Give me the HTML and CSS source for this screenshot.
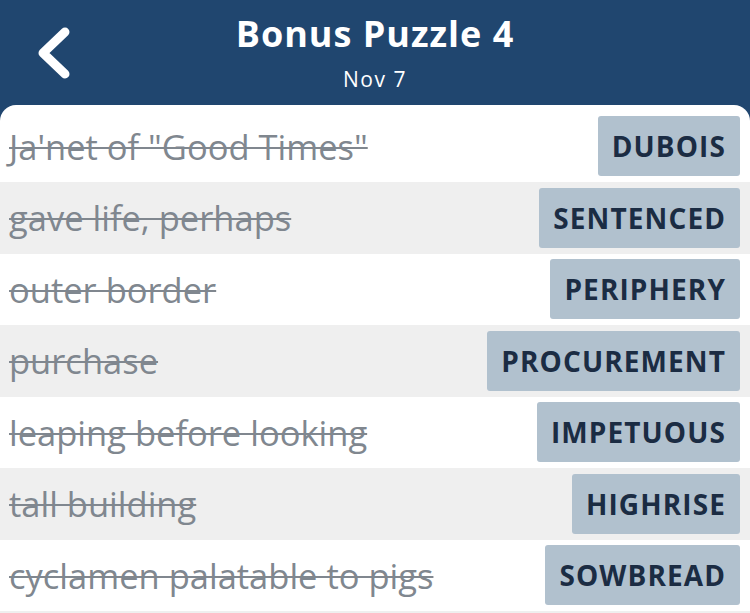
FILE: index.html
```html
<!DOCTYPE html>
<html>

<head>
    <meta charset="utf-8">
    <title>Bonus Puzzle 4</title>
    <meta name="viewport" content="width=device-width, initial-scale=1.0">
    <link rel="stylesheet" href="styles.css">
</head>

<body>
    <div id="topBar">
        <div class="back">
            <svg width="34" height="52" viewBox="0 0 34 52">
                <path d="M29 5 L7 26 L29 47" fill="none" stroke="#ffffff" stroke-width="9" stroke-linecap="round" stroke-linejoin="round"/>
            </svg>
        </div>
        <div class="titles">
            <div class="title">Bonus Puzzle 4</div>
            <div class="date">Nov 7</div>
        </div>
    </div>

    <div id="clueList">
        <div class="clue">
            <span class="text">Ja'net of "Good Times"</span>
            <span class="answer">DUBOIS</span>
        </div>
        <div class="clue">
            <span class="text">gave life, perhaps</span>
            <span class="answer">SENTENCED</span>
        </div>
        <div class="clue">
            <span class="text">outer border</span>
            <span class="answer">PERIPHERY</span>
        </div>
        <div class="clue">
            <span class="text">purchase</span>
            <span class="answer">PROCUREMENT</span>
        </div>
        <div class="clue">
            <span class="text">leaping before looking</span>
            <span class="answer">IMPETUOUS</span>
        </div>
        <div class="clue">
            <span class="text">tall building</span>
            <span class="answer">HIGHRISE</span>
        </div>
        <div class="clue">
            <span class="text">cyclamen palatable to pigs</span>
            <span class="answer">SOWBREAD</span>
        </div>
        <div class="listEnd"></div>
    </div>
</body>
</html>
```

FILE: styles.css
```css
html, body {
    margin: 0;
    height: 100%;
    overflow: hidden;
}

body {
    background-color: #20466f;
    font-family: "Open Sans", "Lato", sans-serif;
}

#topBar {
    height: 105px;
    display: flex;
    align-items: flex-start;
    color: #ffffff;
}

.back {
    width: 110px;
    padding: 27px 0 0 36px;
    box-sizing: border-box;
}

.back svg {
    display: block;
}

.titles {
    flex: 1;
    text-align: center;
    margin-right: 110px;
    padding-top: 14px;
}

.title {
    font-size: 36px;
    font-weight: bold;
    line-height: 40px;
    letter-spacing: 1px;
}

.date {
    font-size: 21px;
    line-height: 26px;
    letter-spacing: 1.5px;
    margin-top: 12px;
}

#clueList {
    background-color: #ffffff;
    border-radius: 16px 16px 0 0;
    padding-top: 5.5px;
}

.clue {
    height: 71.5px;
    display: flex;
    align-items: center;
    justify-content: space-between;
    padding: 0 10px 0 9px;
}

.clue:nth-child(even) {
    background-color: #efefef;
}

.listEnd {
    height: 2px;
    background-color: #efefef;
}

.text {
    font-size: 34.5px;
    color: #80878f;
    text-decoration: line-through;
    text-decoration-thickness: 2px;
    white-space: nowrap;
}

.answer {
    height: 60px;
    line-height: 60px;
    padding: 0 14px;
    background-color: #b1c1ce;
    border-radius: 3px;
    color: #1b2c43;
    font-size: 28px;
    font-weight: bold;
    letter-spacing: 1.1px;
}
```
